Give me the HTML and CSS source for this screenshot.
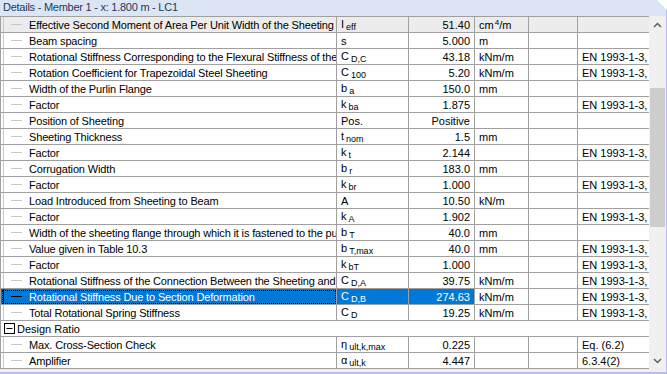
FILE: index.html
```html
<!DOCTYPE html>
<html lang="en">
<head>
  <meta charset="UTF-8" />
  <title>Details - Member 1</title>
  <link rel="stylesheet" href="styles.css">
</head>
<body>

  <div class="panel">
    <div class="title">Details - Member 1 - x: 1.800 m - LC1</div>

    <div class="body">
      <div class="grid-wrap">
        <table class="details">
          <colgroup>
            <col class="c-desc" />
            <col class="c-sym" />
            <col class="c-val" />
            <col class="c-unit" />
            <col class="c-empty" />
            <col class="c-ref" />
          </colgroup>
          <tr class="first">
            <td class="desc">Effective Second Moment of Area Per Unit Width of the Sheeting</td>
            <td class="sym">I<span class="sub">eff</span></td>
            <td class="val">51.40</td>
            <td class="unit">cm<span class="sup">4</span>/m</td>
            <td></td>
            <td class="ref"></td>
          </tr>
          <tr>
            <td class="desc">Beam spacing</td>
            <td class="sym">s</td>
            <td class="val">5.000</td>
            <td class="unit">m</td>
            <td></td>
            <td class="ref"></td>
          </tr>
          <tr>
            <td class="desc">Rotational Stiffness Corresponding to the Flexural Stiffness of the Sheeting</td>
            <td class="sym">C<span class="sub">D,C</span></td>
            <td class="val">43.18</td>
            <td class="unit">kNm/m</td>
            <td></td>
            <td class="ref">EN 1993-1-3, 10.1.5.2</td>
          </tr>
          <tr>
            <td class="desc">Rotation Coefficient for Trapezoidal Steel Sheeting</td>
            <td class="sym">C<span class="sub">100</span></td>
            <td class="val">5.20</td>
            <td class="unit">kNm/m</td>
            <td></td>
            <td class="ref">EN 1993-1-3, 10.1.5.2</td>
          </tr>
          <tr>
            <td class="desc">Width of the Purlin Flange</td>
            <td class="sym">b<span class="sub">a</span></td>
            <td class="val">150.0</td>
            <td class="unit">mm</td>
            <td></td>
            <td class="ref"></td>
          </tr>
          <tr>
            <td class="desc">Factor</td>
            <td class="sym">k<span class="sub">ba</span></td>
            <td class="val">1.875</td>
            <td class="unit"></td>
            <td></td>
            <td class="ref">EN 1993-1-3, 10.1.5.2</td>
          </tr>
          <tr>
            <td class="desc">Position of Sheeting</td>
            <td class="sym">Pos.</td>
            <td class="val">Positive</td>
            <td class="unit"></td>
            <td></td>
            <td class="ref"></td>
          </tr>
          <tr>
            <td class="desc">Sheeting Thickness</td>
            <td class="sym">t<span class="sub">nom</span></td>
            <td class="val">1.5</td>
            <td class="unit">mm</td>
            <td></td>
            <td class="ref"></td>
          </tr>
          <tr>
            <td class="desc">Factor</td>
            <td class="sym">k<span class="sub">t</span></td>
            <td class="val">2.144</td>
            <td class="unit"></td>
            <td></td>
            <td class="ref">EN 1993-1-3, 10.1.5.2</td>
          </tr>
          <tr>
            <td class="desc">Corrugation Width</td>
            <td class="sym">b<span class="sub">r</span></td>
            <td class="val">183.0</td>
            <td class="unit">mm</td>
            <td></td>
            <td class="ref"></td>
          </tr>
          <tr>
            <td class="desc">Factor</td>
            <td class="sym">k<span class="sub">br</span></td>
            <td class="val">1.000</td>
            <td class="unit"></td>
            <td></td>
            <td class="ref">EN 1993-1-3, 10.1.5.2</td>
          </tr>
          <tr>
            <td class="desc">Load Introduced from Sheeting to Beam</td>
            <td class="sym">A</td>
            <td class="val">10.50</td>
            <td class="unit">kN/m</td>
            <td></td>
            <td class="ref"></td>
          </tr>
          <tr>
            <td class="desc">Factor</td>
            <td class="sym">k<span class="sub">A</span></td>
            <td class="val">1.902</td>
            <td class="unit"></td>
            <td></td>
            <td class="ref">EN 1993-1-3, 10.1.5.2</td>
          </tr>
          <tr>
            <td class="desc">Width of the sheeting flange through which it is fastened to the purlin</td>
            <td class="sym">b<span class="sub">T</span></td>
            <td class="val">40.0</td>
            <td class="unit">mm</td>
            <td></td>
            <td class="ref"></td>
          </tr>
          <tr>
            <td class="desc">Value given in Table 10.3</td>
            <td class="sym">b<span class="sub">T,max</span></td>
            <td class="val">40.0</td>
            <td class="unit">mm</td>
            <td></td>
            <td class="ref">EN 1993-1-3, 10.1.5.2</td>
          </tr>
          <tr>
            <td class="desc">Factor</td>
            <td class="sym">k<span class="sub">bT</span></td>
            <td class="val">1.000</td>
            <td class="unit"></td>
            <td></td>
            <td class="ref">EN 1993-1-3, 10.1.5.2</td>
          </tr>
          <tr>
            <td class="desc">Rotational Stiffness of the Connection Between the Sheeting and the Beam</td>
            <td class="sym">C<span class="sub">D,A</span></td>
            <td class="val">39.75</td>
            <td class="unit">kNm/m</td>
            <td></td>
            <td class="ref">EN 1993-1-3, 10.1.5.2</td>
          </tr>
          <tr class="selected">
            <td class="desc">Rotational Stiffness Due to Section Deformation</td>
            <td class="sym">C<span class="sub">D,B</span></td>
            <td class="val">274.63</td>
            <td class="unit">kNm/m</td>
            <td></td>
            <td class="ref">EN 1993-1-3, 10.1.5.2</td>
          </tr>
          <tr>
            <td class="desc">Total Rotational Spring Stiffness</td>
            <td class="sym">C<span class="sub">D</span></td>
            <td class="val">19.25</td>
            <td class="unit">kNm/m</td>
            <td></td>
            <td class="ref">EN 1993-1-3, 10.1.5.2</td>
          </tr>
          <tr class="group">
            <td colspan="6">
              <svg class="toggle" width="11" height="11" viewBox="0 0 11 11">
                <rect x="0.5" y="0.5" width="10" height="10" fill="#fff" stroke="#000" />
                <line x1="2.5" y1="5.5" x2="8.5" y2="5.5" stroke="#000" />
              </svg>Design Ratio
            </td>
          </tr>
          <tr>
            <td class="desc">Max. Cross-Section Check</td>
            <td class="sym">&eta;<span class="sub">ult,k,max</span></td>
            <td class="val">0.225</td>
            <td class="unit"></td>
            <td></td>
            <td class="ref">Eq. (6.2)</td>
          </tr>
          <tr>
            <td class="desc">Amplifier</td>
            <td class="sym">&alpha;<span class="sub">ult,k</span></td>
            <td class="val">4.447</td>
            <td class="unit"></td>
            <td></td>
            <td class="ref">6.3.4(2)</td>
          </tr>
        </table>
      </div>

      <div class="scrollbar">
        <div class="arrow">
          <svg width="9" height="6" viewBox="0 0 9 6"><polyline points="1,5 4.5,1.5 8,5" fill="none" stroke="#606060" stroke-width="1.5" /></svg>
        </div>
        <div class="track">
          <div class="thumb"></div>
        </div>
        <div class="arrow">
          <svg width="9" height="6" viewBox="0 0 9 6"><polyline points="1,1 4.5,4.5 8,1" fill="none" stroke="#606060" stroke-width="1.5" /></svg>
        </div>
      </div>
    </div>

    <div class="footer"></div>
  </div>

</body>
</html>
```

FILE: styles.css
```css
* {
  box-sizing: border-box;
}
body {
  margin: 0;
  background-color: #fff;
  font-family: "Liberation Sans", Arial, sans-serif;
  font-size: 11px;
  color: #000;
}
.panel {
  width: 667px;
  height: 374px;
  display: flex;
  flex-direction: column;
  border-right: 1px solid #b8bdf0;
  border-bottom: 2px solid #b8bdf0;
  clip-path: polygon(0 0, 657px 0, 667px 10px, 667px 100%, 0 100%);
}
.title {
  height: 16px;
  line-height: 15px;
  padding-left: 3px;
  background-color: #dbe5f4;
  color: #1e395b;
  white-space: nowrap;
  letter-spacing: -0.25px;
}
.body {
  display: flex;
  height: 353px;
}
.grid-wrap {
  width: 649px;
  overflow: hidden;
}
.details {
  width: 649px;
  table-layout: fixed;
  border-collapse: collapse;
}
.c-desc { width: 336px; }
.c-sym { width: 72px; }
.c-val { width: 66px; }
.c-unit { width: 54px; }
.c-empty { width: 49px; }
.c-ref { width: 72px; }

.details td {
  height: 16px;
  padding: 0 4px;
  line-height: 14px;
  border: 1px solid #a0a0a0;
  white-space: nowrap;
  overflow: hidden;
}
.details td.desc {
  padding-left: 28px;
  letter-spacing: -0.15px;
  background-image:
    linear-gradient(#c8c8c8, #c8c8c8),
    linear-gradient(#c8c8c8, #c8c8c8);
  background-size: 1px 100%, 11px 1px;
  background-position: 2px 0, 10px 7px;
  background-repeat: no-repeat;
}
.details td.val {
  text-align: right;
}
.details td.ref {
  padding-left: 4px;
}
.first td {
  background-color: #ececec;
}
.selected td.desc,
.selected td.sym,
.selected td.val {
  background-color: #0078d7;
  color: #fff;
}
.selected td.desc {
  background-image:
    linear-gradient(#000, #000),
    linear-gradient(#000, #000);
  outline: 1px dotted #000;
  outline-offset: -2px;
}
.group td {
  padding-left: 3px;
}
.toggle {
  vertical-align: -1px;
  margin-right: 2px;
}
.sub {
  font-size: 9px;
  margin-left: 2px;
  position: relative;
  top: 2px;
}
.sup {
  font-size: 8px;
  margin-left: 1px;
  vertical-align: 4px;
  line-height: 0;
}
.scrollbar {
  width: 17px;
  display: flex;
  flex-direction: column;
  background-color: #f0f0f0;
}
.arrow {
  height: 17px;
  display: flex;
  align-items: center;
  justify-content: center;
}
.track {
  flex: 1;
  padding: 0 1px;
}
.thumb {
  margin-top: 55px;
  height: 139px;
  background-color: #cdcdcd;
}
.footer {
  flex: 1;
  background-color: #f0f0f0;
}
```
